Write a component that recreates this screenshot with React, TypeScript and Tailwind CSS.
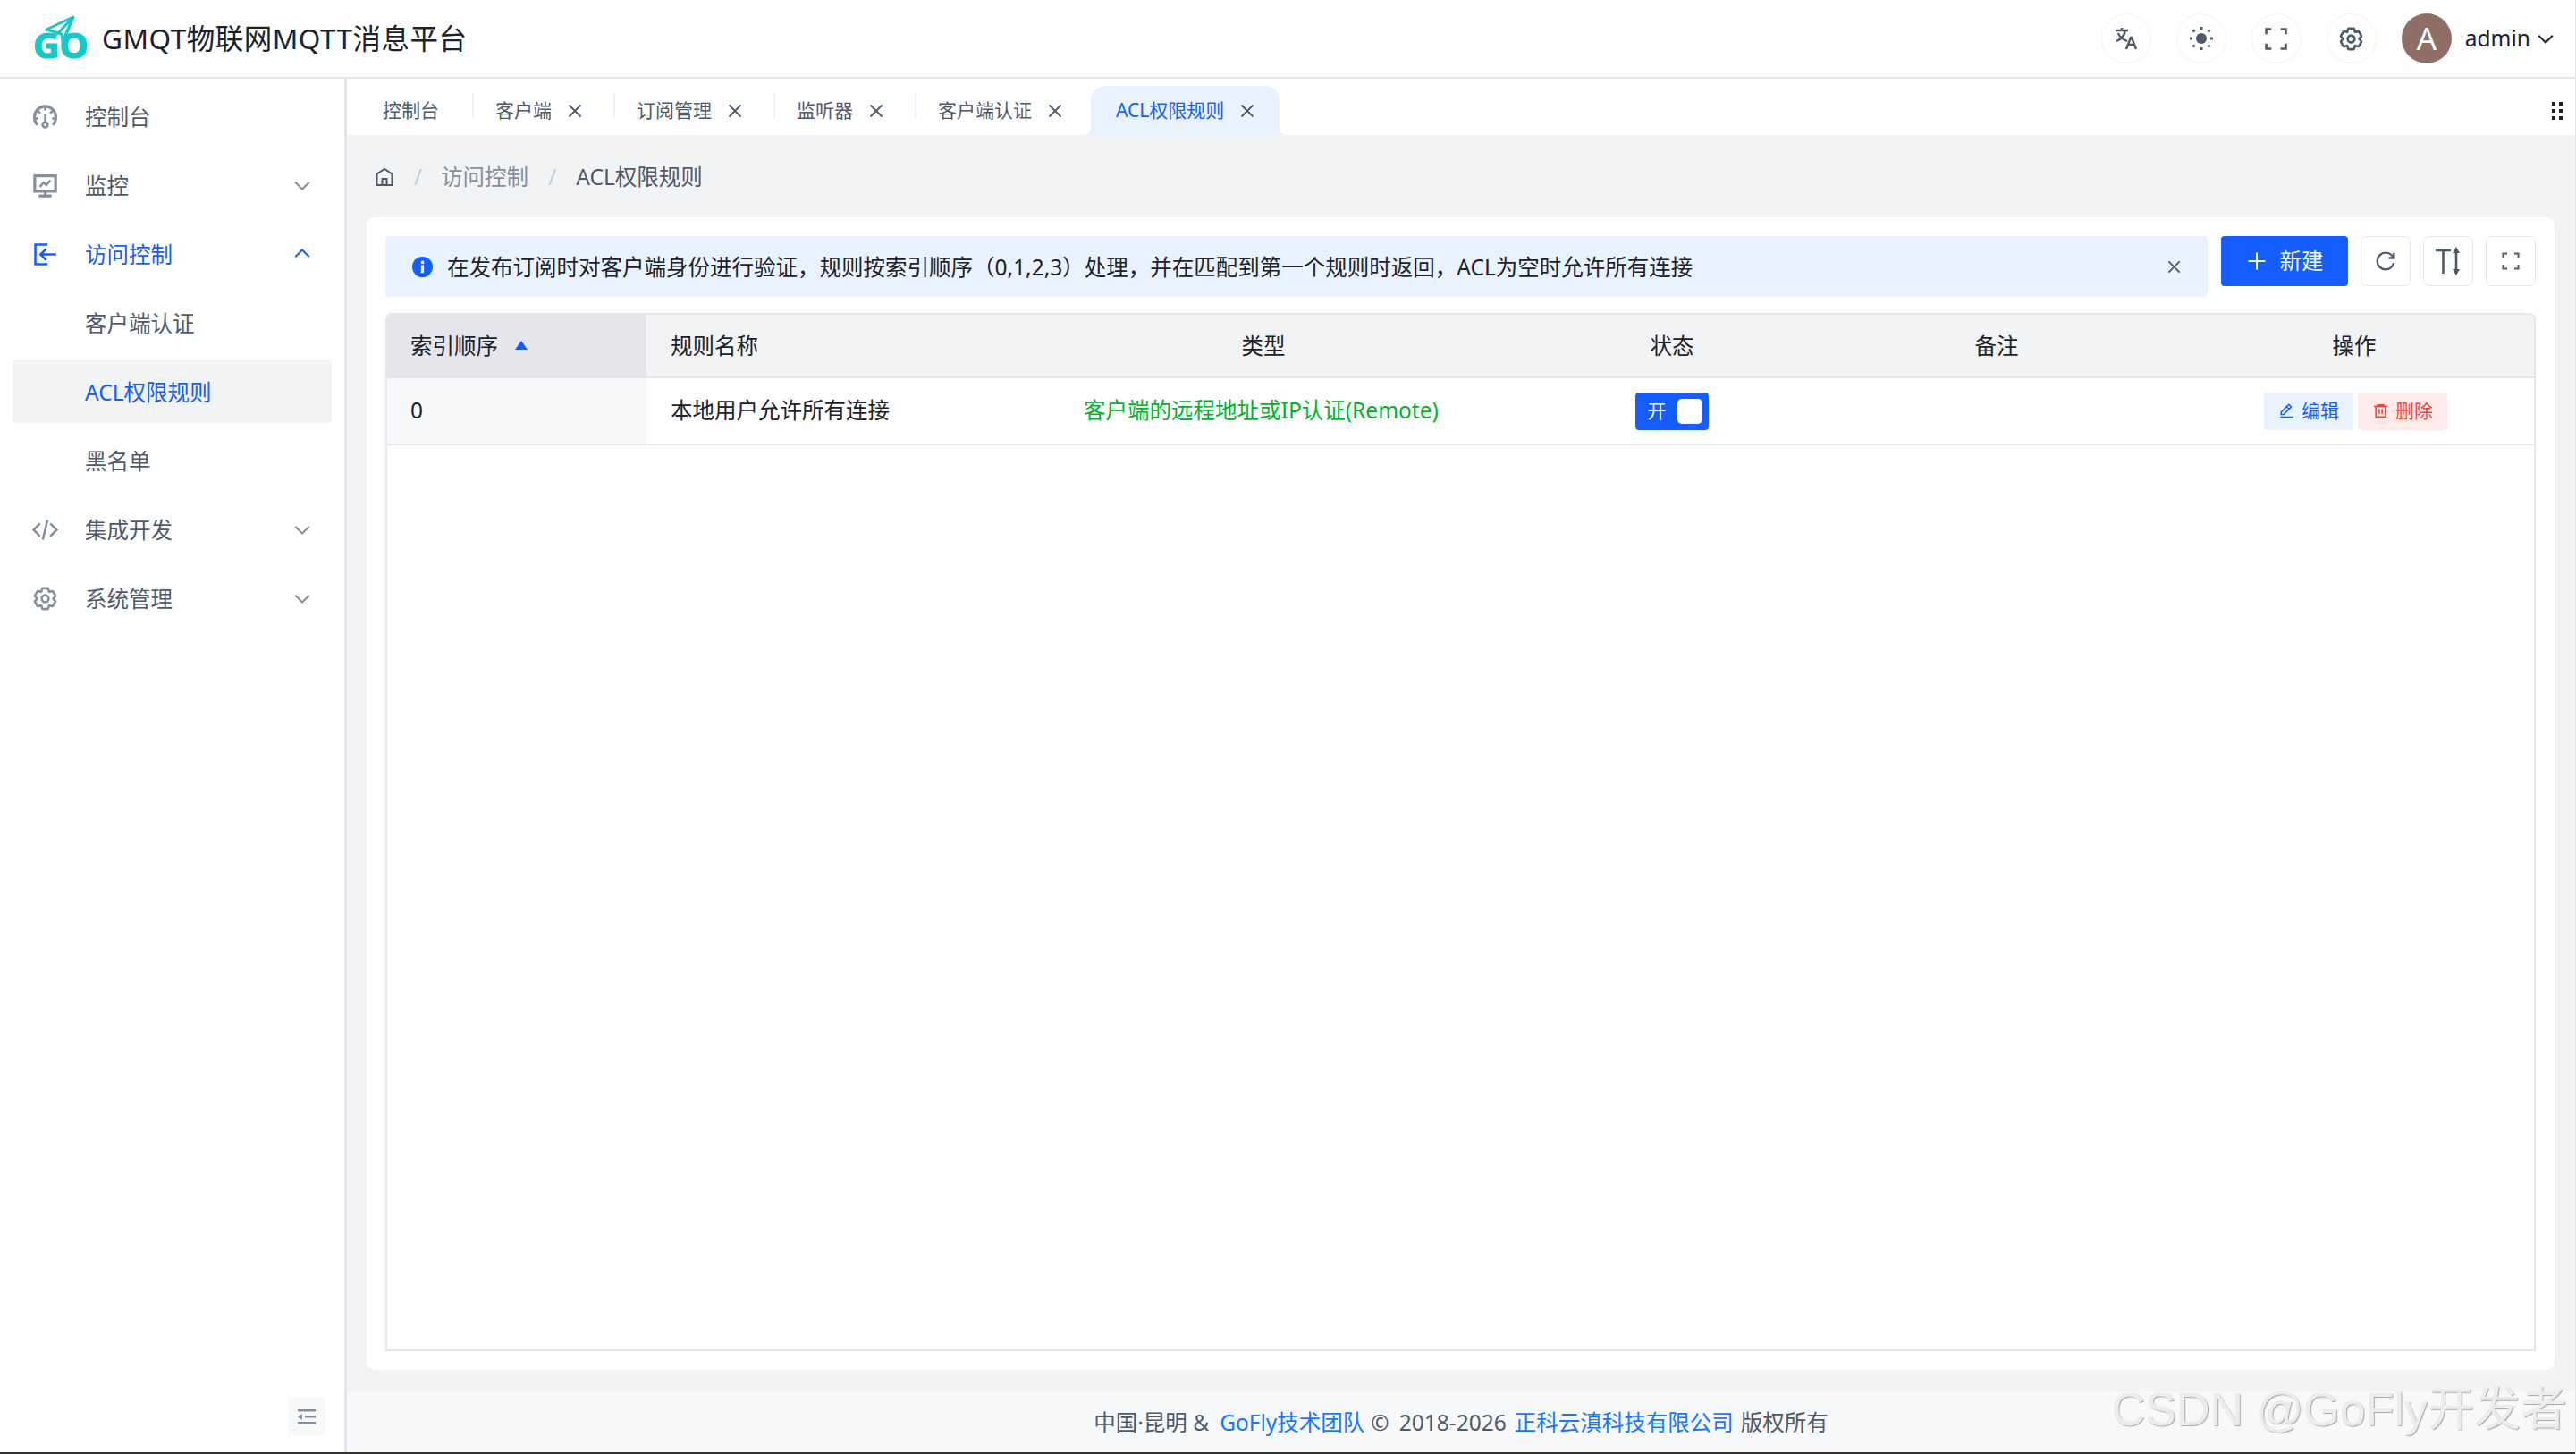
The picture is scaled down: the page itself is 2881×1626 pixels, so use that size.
import React from "react";

type IconProps = { className?: string; children: React.ReactNode };
const Ico = ({ className = "", children }: IconProps) => (
  <svg viewBox="0 0 48 48" fill="none" stroke="currentColor" strokeWidth={4} className={`shrink-0 ${className}`}>
    {children}
  </svg>
);

const settingsPath =
  "M18.797 6.732A1 1 0 0 1 19.76 6h8.48a1 1 0 0 1 .964.732l1.285 4.628a1 1 0 0 0 1.213.7l4.651-1.2a1 1 0 0 1 1.116.468l4.24 7.344a1 1 0 0 1-.153 1.2L38.193 23.3a1 1 0 0 0 0 1.402l3.364 3.427a1 1 0 0 1 .153 1.2l-4.24 7.344a1 1 0 0 1-1.116.468l-4.65-1.2a1 1 0 0 0-1.214.7l-1.285 4.628a1 1 0 0 1-.964.732h-8.48a1 1 0 0 1-.963-.732L17.51 36.64a1 1 0 0 0-1.213-.7l-4.65 1.2a1 1 0 0 1-1.116-.468l-4.24-7.344a1 1 0 0 1 .153-1.2L9.809 24.7a1 1 0 0 0 0-1.402l-3.364-3.427a1 1 0 0 1-.153-1.2l4.24-7.344a1 1 0 0 1 1.116-.468l4.65 1.2a1 1 0 0 0 1.213-.7l1.286-4.628Z";

const Settings = ({ className }: { className?: string }) => (
  <Ico className={className}>
    <path d={settingsPath} />
    <path d="M30 24a6 6 0 1 1-12 0 6 6 0 0 1 12 0Z" />
  </Ico>
);
const Dashboard = ({ className }: { className?: string }) => (
  <Ico className={className}>
    <path d="M11 38C7 34.500 5.500 29.500 5.500 25 5.500 14.500 14 6 24 6s18.500 8.500 18.500 19c0 4.500-1.500 9.500-5.500 13" strokeWidth={5} />
    <path d="M24 6v7M10.500 13l5 5M37.500 13l-5 5M6 27h6M36 27h6M24 20v14" />
    <circle cx="24" cy="38" r="4.500" />
  </Ico>
);
const Desktop = ({ className }: { className?: string }) => (
  <Ico className={className}>
    <path d="M6 7h36v27H6zM24 34v8M13 42h22" strokeWidth={5} />
    <path d="m15 26 6-7 5 4 7-8" />
  </Ico>
);
const Import = ({ className }: { className?: string }) => (
  <Ico className={className}>
    <path d="M28 7H7v34h21M43 24H17M26 14l-10 10 10 10" />
  </Ico>
);
const Code = ({ className }: { className?: string }) => (
  <Ico className={className}>
    <path d="M15 13 4 24l11 11M33 13l11 11-11 11M28 7l-8 34" />
  </Ico>
);
const Down = ({ className }: { className?: string }) => (
  <Ico className={className}>
    <path d="M39.600 17.443 24.043 33 8.487 17.443" />
  </Ico>
);
const Up = ({ className }: { className?: string }) => (
  <Ico className={className}>
    <path d="M39.600 30.557 24.043 15 8.487 30.557" />
  </Ico>
);
const Close = ({ className }: { className?: string }) => (
  <Ico className={className}>
    <path d="m9.857 9.858 28.285 28.284M9.858 38.142 38.142 9.857" />
  </Ico>
);
const Fullscreen = ({ className }: { className?: string }) => (
  <Ico className={className}>
    <path d="M7 16V7h9M32 7h9v9M41 32v9h-9M16 41H7v-9" />
  </Ico>
);

const Logo = () => (
  <svg viewBox="0 0 62 50" className="w-[62px] h-[50px] shrink-0 overflow-visible">
    <path d="M45 1 15 15l17 5 1 8z" fill="none" stroke="#14c9c9" strokeWidth={3} strokeLinejoin="round" />
    <path d="M45 1 34 27M45 1 27 20" fill="none" stroke="#14c9c9" strokeWidth={3} />
    <text
      x="0"
      y="47"
      fontSize="39"
      fontWeight="700"
      fill="#14c9c9"
      stroke="#14c9c9"
      strokeWidth={1.2}
      textLength={62}
      lengthAdjust="spacingAndGlyphs"
      className="font-['Noto_Sans']"
    >
      GO
    </text>
  </svg>
);

const Round = ({ children }: { children: React.ReactNode }) => (
  <div className="w-[56px] h-[56px] rounded-full border border-[#f2f3f5] flex items-center justify-center text-[#4e5969] bg-white">
    {children}
  </div>
);

const SideRow = ({
  icon,
  label,
  active,
  selected,
  arrow,
}: {
  icon?: React.ReactNode;
  label: string;
  active?: boolean;
  selected?: boolean;
  arrow?: "up" | "down";
}) => (
  <div
    className={`h-[70px] rounded-[4px] flex items-center pl-[21px] pr-[21px] ${selected ? "bg-[#f2f3f5]" : ""} ${
      active || selected ? "text-[#165dff]" : "text-[#4e5969]"
    }`}
  >
    <div className={`w-[31px] flex justify-center shrink-0 ${active ? "text-[#165dff]" : "text-[#86909c]"}`}>{icon}</div>
    <span className="ml-[29px] flex-1 pt-[3px]">{label}</span>
    {arrow === "down" && <Down className="w-[24px] h-[24px] text-[#86909c]" />}
    {arrow === "up" && <Up className="w-[24px] h-[24px] text-[#165dff]" />}
  </div>
);

const Sep = () => <div className="w-[2px] h-[28px] bg-[#e8f3ff] mt-[8px] shrink-0" />;

const Tab = ({ label, first }: { label: string; first?: boolean }) => (
  <div className={`h-[55px] flex items-center text-[21px] text-[#4e5969] ${first ? "pl-[40px] pr-[37px]" : "pl-[24px] pr-[32px]"}`}>
    <span>{label}</span>
    {!first && <Close className="w-[22px] h-[22px] ml-[15px] text-[#4e5969]" />}
  </div>
);

const ToolBtn = ({ children }: { children: React.ReactNode }) => (
  <div className="w-[56px] h-[56px] rounded-[7px] border border-[#e5e6eb] bg-white flex items-center justify-center text-[#4e5969]">
    {children}
  </div>
);

const HCell = ({ children, className = "" }: { children?: React.ReactNode; className?: string }) => (
  <div className={`flex items-center justify-center ${className}`}>{children}</div>
);

export default function App() {
  return (
    <div className="w-screen h-screen overflow-hidden flex flex-col bg-white text-[24.5px] text-[#1d2129] font-['Noto_Sans','Noto_Sans_CJK_SC',sans-serif] border-r border-[#e5e5e5] relative">
      <div className="flex-1 flex flex-col min-h-0">
        <header className="h-[88px] shrink-0 border-b-2 border-[#e5e6eb] flex items-center pl-[37px] pr-[21px]">
          <Logo />
          <div className="ml-[15px] text-[31.5px] leading-none tracking-[0.5px] flex-1">GMQT物联网MQTT消息平台</div>
          <div className="flex items-center gap-[28px]">
            <Round>
              <svg viewBox="0 0 28 28" className="w-[28px] h-[28px]" fill="none" stroke="currentColor" strokeWidth={2.4}>
                <path d="M2 5h14M9 2v3M13 5c-1 6-5 10-10 12M5 8c1 4 5 7 10 9M14 26l5-13h1l5 13M16 21h7" />
              </svg>
            </Round>
            <Round>
              <svg viewBox="0 0 28 28" className="w-[28px] h-[28px]" fill="currentColor">
                <circle cx="14" cy="14" r="6" />
                <rect x="12.500" y="1" width="3" height="3" />
                <rect x="12.500" y="24" width="3" height="3" />
                <rect x="1" y="12.500" width="3" height="3" />
                <rect x="24" y="12.500" width="3" height="3" />
                <rect x="4" y="4" width="3" height="3" transform="rotate(45 5.500 5.500)" />
                <rect x="21" y="4" width="3" height="3" transform="rotate(45 22.500 5.500)" />
                <rect x="4" y="21" width="3" height="3" transform="rotate(45 5.500 22.500)" />
                <rect x="21" y="21" width="3" height="3" transform="rotate(45 22.500 22.500)" />
              </svg>
            </Round>
            <Round>
              <Fullscreen className="w-[31px] h-[31px]" />
            </Round>
            <Round>
              <Settings className="w-[31px] h-[31px]" />
            </Round>
            <div className="flex items-center">
              <div className="w-[56px] h-[56px] rounded-full bg-[#8f6f65] text-white flex items-center justify-center text-[35px]">A</div>
              <span className="ml-[15px]">admin</span>
              <Down className="w-[24px] h-[24px] ml-[5px] text-[#1d2129]" />
            </div>
          </div>
        </header>

        <div className="flex-1 flex min-h-0">
          <aside className="w-[388px] shrink-0 border-r-[3px] border-[#e5e6eb] flex flex-col pl-[14px] pr-[14px] pt-[7px] pb-[19px]">
            <div className="flex flex-col gap-[7px] flex-1">
              <SideRow icon={<Dashboard className="w-[31px] h-[31px]" />} label="控制台" />
              <SideRow icon={<Desktop className="w-[31px] h-[31px]" />} label="监控" arrow="down" />
              <SideRow icon={<Import className="w-[31px] h-[31px]" />} label="访问控制" arrow="up" active />
              <SideRow label="客户端认证" />
              <SideRow label="ACL权限规则" selected />
              <SideRow label="黑名单" />
              <SideRow icon={<Code className="w-[31px] h-[31px]" />} label="集成开发" arrow="down" />
              <SideRow icon={<Settings className="w-[31px] h-[31px]" />} label="系统管理" arrow="down" />
            </div>
            <div className="self-end w-[42px] h-[42px] mr-[7px] rounded-[4px] bg-[#f7f8fa] flex items-center justify-center text-[#86909c]">
              <svg viewBox="0 0 20 17" className="w-[20px] h-[17px]" fill="currentColor">
                <rect x="0" y="0" width="20" height="2.500" />
                <rect x="8" y="7" width="12" height="2.500" />
                <rect x="0" y="14" width="20" height="2.500" />
                <path d="M5 5v7L0 8.500z" />
              </svg>
            </div>
          </aside>

          <div className="flex-1 min-w-0 flex flex-col bg-[#f2f3f5]">
            <div className="h-[63px] shrink-0 bg-white flex items-end relative">
              <div className="flex items-start h-[55px]">
                <Tab label="控制台" first />
                <Sep />
                <Tab label="客户端" />
                <Sep />
                <Tab label="订阅管理" />
                <Sep />
                <Tab label="监听器" />
                <Sep />
                <Tab label="客户端认证" />
                <div className="relative h-[55px] -ml-[3px] pl-[28px] pr-[25px] bg-[#e8f3ff] rounded-t-[16px] flex items-center text-[21px] text-[#165dff]">
                  <svg viewBox="0 0 8 8" className="absolute -left-[8px] bottom-0 w-[8px] h-[8px]" fill="#e8f3ff">
                    <path d="M8 0v8H0c4.400 0 8-3.600 8-8z" />
                  </svg>
                  <span>ACL权限规则</span>
                  <Close className="w-[22px] h-[22px] ml-[15px] text-[#4e5969]" />
                  <svg viewBox="0 0 8 8" className="absolute -right-[8px] bottom-0 w-[8px] h-[8px]" fill="#e8f3ff">
                    <path d="M0 0v8h8C3.600 8 0 4.400 0 0z" />
                  </svg>
                </div>
              </div>
              <div className="absolute right-[14px] top-[26px] grid grid-cols-2 gap-x-[4px] gap-y-[4px]">
                {[0, 1, 2, 3, 4, 5].map((i) => (
                  <div key={i} className="w-[4px] h-[4px] bg-[#1d2129]" />
                ))}
              </div>
            </div>

            <div className="h-[92px] shrink-0 flex items-center pl-[30px] pt-[2px]">
              <svg viewBox="0 0 48 48" fill="none" stroke="currentColor" strokeWidth={4} className="w-[24px] h-[24px] text-[#4e5969]">
                <path d="M7 17 24 6l17 11v25H7V17Z" />
                <path d="M19 28h10v14H19V28Z" />
              </svg>
              <span className="mx-[21px] text-[#c9cdd4]">/</span>
              <span className="text-[#86909c]">访问控制</span>
              <span className="mx-[22px] text-[#c9cdd4]">/</span>
              <span className="text-[#4e5969]">ACL权限规则</span>
            </div>

            <div className="flex-1 min-h-0 flex flex-col ml-[22px] mr-[23px] mb-[24px] p-[21px] bg-white rounded-[9px]">
              <div className="flex items-start gap-[14px] shrink-0">
                <div className="flex-1 h-[68px] mr-[1px] rounded-[4px] bg-[#e8f3ff] flex items-center pl-[30px] pr-[27px]">
                  <svg viewBox="0 0 24 24" className="w-[23px] h-[23px] shrink-0">
                    <circle cx="12" cy="12" r="12" fill="#165dff" />
                    <rect x="10.300" y="5" width="3.400" height="3.400" fill="#fff" />
                    <rect x="10.300" y="10" width="3.400" height="9" fill="#fff" />
                  </svg>
                  <span className="ml-[16px] flex-1 pt-[2px]">在发布订阅时对客户端身份进行验证，规则按索引顺序（0,1,2,3）处理，并在匹配到第一个规则时返回，ACL为空时允许所有连接</span>
                  <Close className="w-[21px] h-[21px] text-[#4e5969]" />
                </div>
                <div className="w-[142px] h-[56px] rounded-[4px] bg-[#165dff] text-white flex items-center justify-center">
                  <Ico className="w-[24px] h-[24px]">
                    <path d="M5 24h38M24 5v38" />
                  </Ico>
                  <span className="ml-[14px]">新建</span>
                </div>
                <ToolBtn>
                  <Ico className="w-[28px] h-[28px]">
                    <path d="M38.837 18C36.463 12.136 30.715 8 24 8 15.163 8 8 15.163 8 24s7.163 16 16 16c7.455 0 13.720-5.100 15.496-12M40 8v10H30" />
                  </Ico>
                </ToolBtn>
                <ToolBtn>
                  <svg viewBox="0 0 28 32" className="w-[28px] h-[32px]" fill="none" stroke="currentColor" strokeWidth={2.600}>
                    <path d="M0 4h17M8.500 4v26M23 6v20" />
                    <path d="M23 0l4 7h-8zM23 32l4-7h-8z" fill="currentColor" stroke="none" />
                  </svg>
                </ToolBtn>
                <ToolBtn>
                  <Fullscreen className="w-[24px] h-[24px]" />
                </ToolBtn>
              </div>

              <div className="mt-[18px] flex-1 min-h-0 border-2 border-[#e5e6eb] rounded-t-[7px] overflow-hidden">
                <div className="grid grid-cols-[290px_397px_586px_328px_398px_1fr] h-[71px] bg-[#f2f3f5] border-b-2 border-[#e5e6eb]">
                  <div className="bg-[#e5e6eb] flex items-center pl-[26px]">
                    <span className="pt-[2px]">索引顺序</span>
                    <svg viewBox="0 0 14 10" className="w-[14px] h-[10px] ml-[19px] mb-[2px]" fill="#165dff">
                      <path d="M7 0l7 10H0z" />
                    </svg>
                  </div>
                  <div className="flex items-center pl-[27px] pt-[2px]">规则名称</div>
                  <HCell className="pt-[2px]">类型</HCell>
                  <HCell className="pt-[2px]">状态</HCell>
                  <HCell className="pt-[2px]">备注</HCell>
                  <HCell className="pt-[2px]">操作</HCell>
                </div>
                <div className="grid grid-cols-[290px_397px_586px_328px_398px_1fr] h-[75px] border-b-2 border-[#e5e6eb]">
                  <div className="bg-[#f7f8fa] flex items-center pl-[26px]">0</div>
                  <div className="flex items-center pl-[27px]">本地用户允许所有连接</div>
                  <HCell className="text-[#00b42a] pr-[5px]">客户端的远程地址或IP认证(Remote)</HCell>
                  <HCell className="pr-[1px]">
                    <div className="w-[82px] h-[42px] rounded-[4px] bg-[#165dff] flex items-center pl-[14px] pr-[7px] justify-between text-white text-[21px]">
                      <span>开</span>
                      <div className="w-[28px] h-[28px] rounded-[5px] bg-white" />
                    </div>
                  </HCell>
                  <HCell />
                  <div className="flex items-center pl-[100px] gap-[5px] text-[21px]">
                    <div className="w-[100px] h-[42px] rounded-[4px] bg-[#e8f3ff] text-[#165dff] flex items-center justify-center">
                      <Ico className="w-[19px] h-[19px] mr-[7px]">
                        <path d="m30.480 19.038 5.733-5.734a1 1 0 0 0 0-1.414l-5.586-5.586a1 1 0 0 0-1.414 0l-5.734 5.734m7 7L15.763 33.754a1 1 0 0 1-.590.286l-6.048.708a1 1 0 0 1-1.113-1.069l.477-6.310a1 1 0 0 1 .290-.631l14.700-14.700m7 7-7-7M6 42h36" />
                      </Ico>
                      <span>编辑</span>
                    </div>
                    <div className="w-[100px] h-[42px] rounded-[4px] bg-[#ffece8] text-[#f53f3f] flex items-center justify-center">
                      <Ico className="w-[19px] h-[19px] mr-[7px]">
                        <path d="M5 11h5.500m0 0v29a1 1 0 0 0 1 1h25a1 1 0 0 0 1-1V11m-27 0H16m21.500 0H43m-5.500 0H32m-16 0V7h16v4m-16 0h16M20 18v15m8-15v15" />
                      </Ico>
                      <span>删除</span>
                    </div>
                  </div>
                </div>
              </div>
            </div>

            <footer className="h-[68px] shrink-0 bg-[#f7f8fa] flex items-center justify-center text-[#4e5969] pt-[2px]">
              <span>中国·昆明 &amp; </span>
              <span className="text-[#1677ff] ml-[12px]">GoFly技术团队</span>
              <span className="ml-[7px]">©</span>
              <span className="ml-[11px]">2018-2026</span>
              <span className="text-[#1677ff] ml-[9px]">正科云滇科技有限公司</span>
              <span className="ml-[8px]">版权所有</span>
            </footer>
          </div>
        </div>
      </div>
      <div className="h-[2px] shrink-0 bg-[#333333]" />
      <div className="absolute right-[9px] bottom-[24px] text-[52px] leading-none text-[#ececec] whitespace-nowrap font-['Liberation_Sans','Noto_Sans_CJK_SC',sans-serif] [text-shadow:1px_1px_1px_#a8a8a8]">
        CSDN @GoFly开发者
      </div>
    </div>
  );
}
